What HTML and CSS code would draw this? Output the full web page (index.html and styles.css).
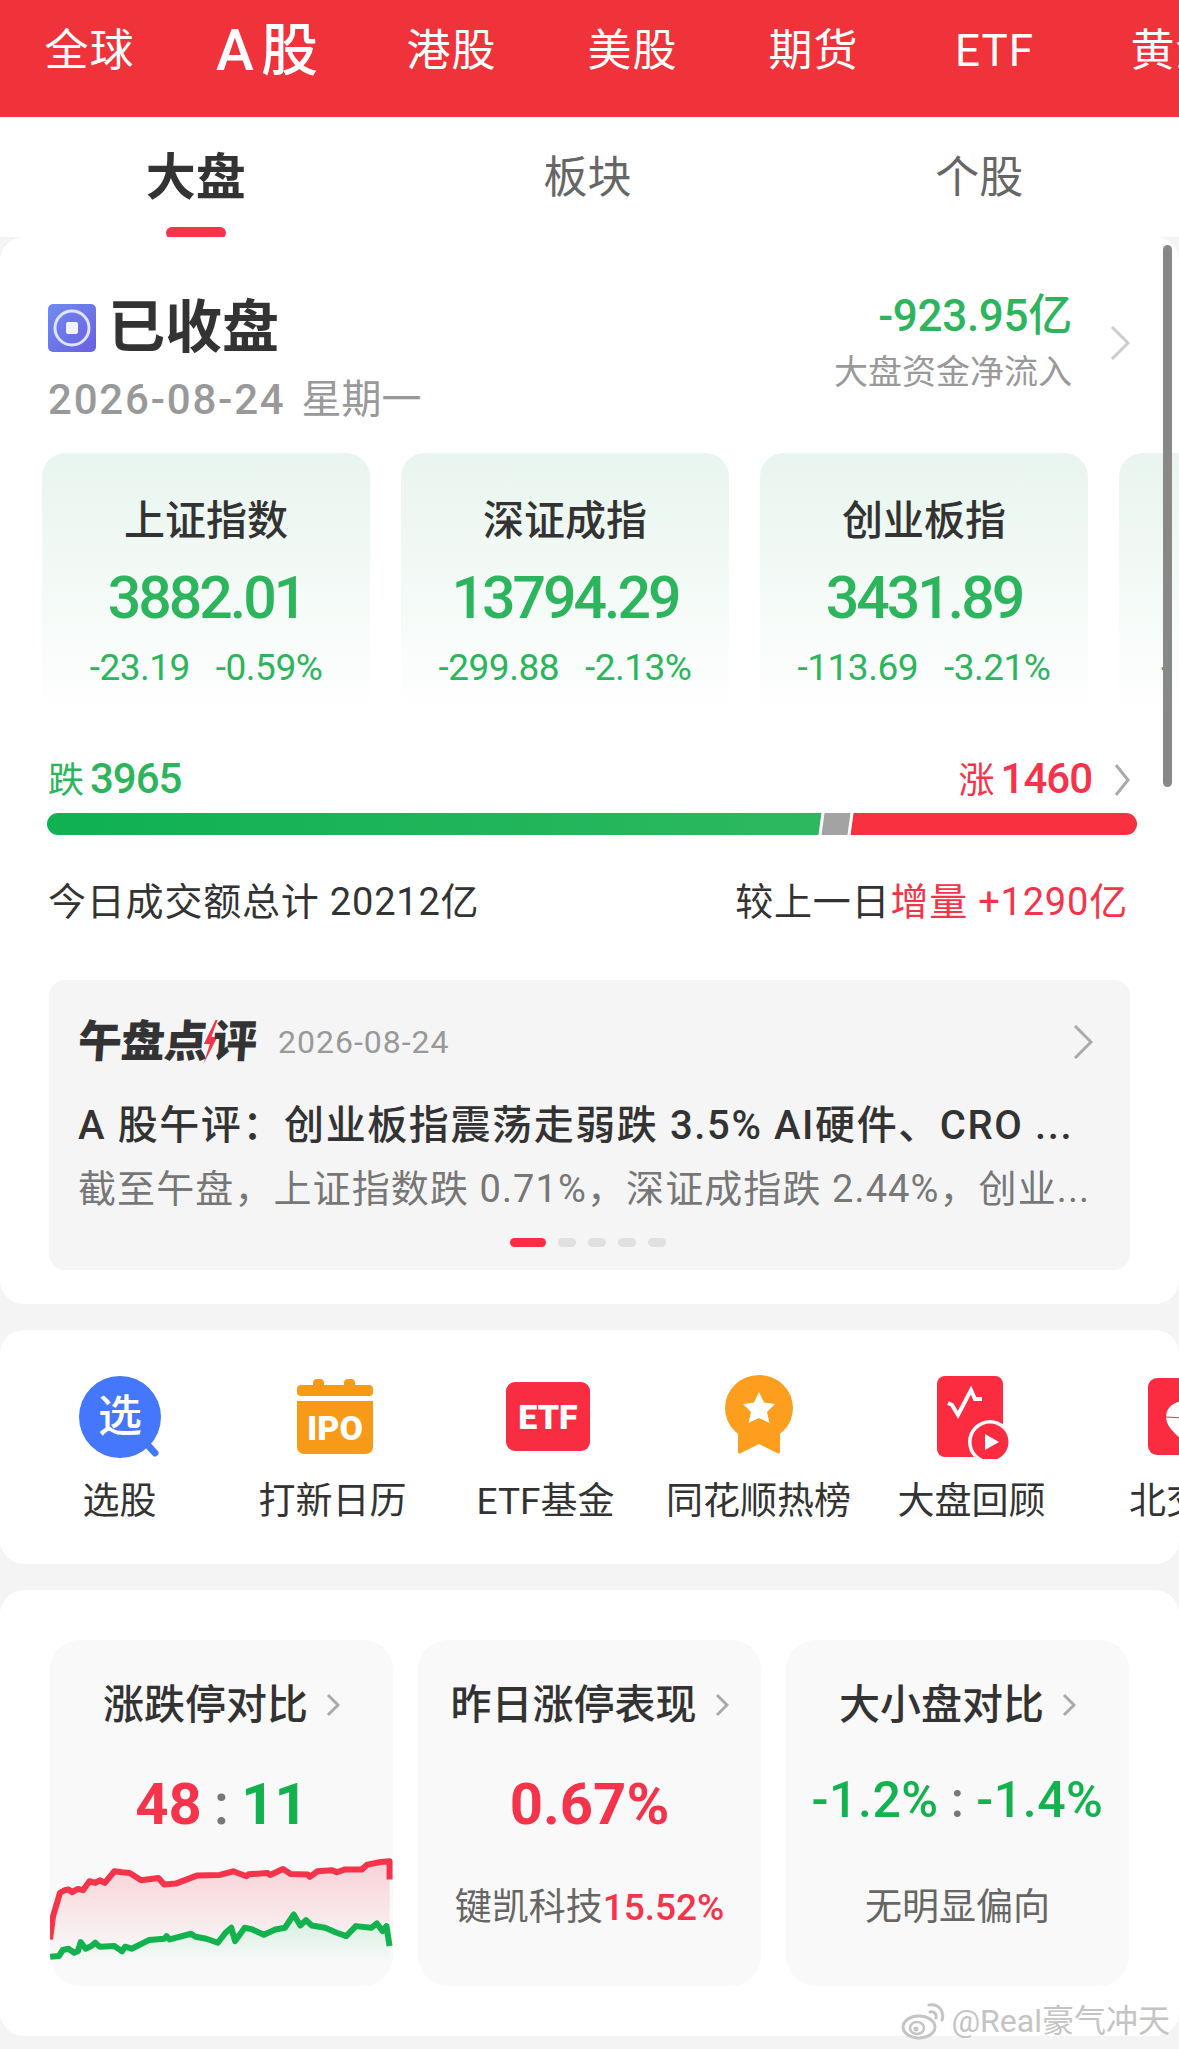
FILE: index.html
```html
<!DOCTYPE html>
<html lang="zh-CN">
<head>
    <meta charset="UTF-8">
    <meta name="viewport" content="width=device-width, initial-scale=1.0">
    <title>行情</title>
    <link rel="stylesheet" href="styles.css">
</head>
<body>

    <nav class="top-nav">
        <span class="top-item">全球</span>
        <span class="top-item top-active">A股</span>
        <span class="top-item">港股</span>
        <span class="top-item">美股</span>
        <span class="top-item">期货</span>
        <span class="top-item">ETF</span>
        <span class="top-item">黄金</span>
    </nav>

    <nav class="sub-nav">
        <span class="sub-item sub-active">大盘</span>
        <span class="sub-item">板块</span>
        <span class="sub-item">个股</span>
    </nav>

    <section class="card market">
        <div class="scroll-thumb"></div>

        <div class="status-row">
            <div>
                <div class="status-title">
                    <svg class="status-icon" viewBox="0 0 48 48">
                        <defs>
                            <linearGradient id="statusFill" x1="0" y1="0" x2="1" y2="1">
                                <stop offset="0" stop-color="#6f8cf0"/>
                                <stop offset="1" stop-color="#6a5fe0"/>
                            </linearGradient>
                        </defs>
                        <rect width="48" height="48" rx="5" fill="url(#statusFill)"/>
                        <circle cx="24" cy="24" r="17" fill="none" stroke="#dfe3fb" stroke-width="3"/>
                        <rect x="18" y="18" width="12" height="12" rx="2" fill="#f2f3fe"/>
                    </svg>
                    <span>已收盘</span>
                </div>
                <div class="status-date"><span class="date-num">2026-08-24</span> 星期一</div>
            </div>
            <div class="flow">
                <div class="flow-text">
                    <div class="flow-value">-923.95亿</div>
                    <div class="flow-label">大盘资金净流入</div>
                </div>
                <svg class="chev chev-light" width="20" height="36" viewBox="0 0 20 36"><path d="M2 2 L18 18 L2 34"/></svg>
            </div>
        </div>

        <div class="indices">
            <div class="index-card">
                <div class="index-name">上证指数</div>
                <div class="index-value">3882.01</div>
                <div class="index-change"><span>-23.19</span><span>-0.59%</span></div>
            </div>
            <div class="index-card">
                <div class="index-name">深证成指</div>
                <div class="index-value">13794.29</div>
                <div class="index-change"><span>-299.88</span><span>-2.13%</span></div>
            </div>
            <div class="index-card">
                <div class="index-name">创业板指</div>
                <div class="index-value">3431.89</div>
                <div class="index-change"><span>-113.69</span><span>-3.21%</span></div>
            </div>
            <div class="index-card index-peek">
                <div class="index-change">-</div>
            </div>
        </div>

        <div class="breadth">
            <div class="fall">跌 <b>3965</b></div>
            <div class="rise-wrap">
                <div class="rise">涨 <b>1460</b></div>
                <svg class="chev" width="16" height="34" viewBox="0 0 16 34"><path d="M2 2 L14 17 L2 32"/></svg>
            </div>
        </div>
        <div class="bar">
            <div class="bar-green"></div>
            <div class="bar-gray"></div>
            <div class="bar-red"></div>
        </div>

        <div class="turnover">
            <div>今日成交额总计 20212亿</div>
            <div>较上一日<span class="red">增量 +1290亿</span></div>
        </div>

        <div class="news">
            <div class="news-head">
                <div class="news-logo">午盘点<svg class="bolt" width="16" height="44" viewBox="0 0 16 44"><path d="M12 0 L2 24 L8 24 L3 44 L15 17 L9 17 L14 0 Z"/></svg>评</div>
                <div class="news-date">2026-08-24</div>
                <svg class="chev news-chev" width="20" height="34" viewBox="0 0 20 34"><path d="M2 1 L18 17 L2 33"/></svg>
            </div>
            <div class="news-title">A 股午评：创业板指震荡走弱跌 3.5% AI硬件、CRO ...</div>
            <div class="news-desc">截至午盘，上证指数跌 0.71%，深证成指跌 2.44%，创业...</div>
            <div class="dots">
                <i class="dot dot-on"></i><i class="dot"></i><i class="dot"></i><i class="dot"></i><i class="dot"></i>
            </div>
        </div>
    </section>

    <section class="card shortcuts">
        <div class="shortcut">
            <svg class="shortcut-icon" viewBox="0 0 100 84">
                <path d="M74 66 L85 78" stroke="#4477fb" stroke-width="7" stroke-linecap="round"/>
                <circle cx="50" cy="42" r="41" fill="#4477fb"/>
                <text class="icon-glyph" x="50" y="57" text-anchor="middle">选</text>
            </svg>
            <span>选股</span>
        </div>
        <div class="shortcut">
            <svg class="shortcut-icon" viewBox="0 0 100 84">
                <rect x="30" y="4" width="11" height="12" rx="4" fill="#f69a18"/>
                <rect x="61" y="4" width="11" height="12" rx="4" fill="#f69a18"/>
                <rect x="14" y="10" width="76" height="11" rx="4" fill="#f69a18"/>
                <path d="M14 26 H90 V72 a7 7 0 0 1 -7 7 H21 a7 7 0 0 1 -7 -7 Z" fill="#f69a18"/>
                <text class="icon-label" x="52" y="65" text-anchor="middle">IPO</text>
            </svg>
            <span>打新日历</span>
        </div>
        <div class="shortcut">
            <svg class="shortcut-icon" viewBox="0 0 100 84">
                <rect x="10" y="7" width="84" height="69" rx="9" fill="#f92d41"/>
                <text class="icon-label" x="52" y="54" text-anchor="middle">ETF</text>
            </svg>
            <span>ETF基金</span>
        </div>
        <div class="shortcut">
            <svg class="shortcut-icon" viewBox="0 0 100 84">
                <path d="M29 50 V77 a1.5 1.5 0 0 0 2 1.5 L50 69 L69 78.5 a1.5 1.5 0 0 0 2 -1.5 V50 Z" fill="#fd9e1f"/>
                <ellipse cx="50" cy="33" rx="34" ry="33" fill="#fd9e1f"/>
                <path d="M50 17 L55 27.5 L66 29 L58 37 L60.5 48 L50 43 L39.5 48 L42 37 L34 29 L45 27.5 Z" fill="#fff"/>
            </svg>
            <span>同花顺热榜</span>
        </div>
        <div class="shortcut">
            <svg class="shortcut-icon" viewBox="0 0 100 84">
                <rect x="15" y="1" width="66" height="81" rx="8" fill="#fb2c40"/>
                <path d="M26 28 L30 30 L36 40 L49 15 L53 24 L60 24" fill="none" stroke="#fff" stroke-width="4"/>
                <circle cx="68" cy="67" r="22" fill="#fff"/>
                <circle cx="68" cy="67" r="18.5" fill="#fb2c40"/>
                <path d="M63 59 L77 67 L63 75 Z" fill="#fff"/>
            </svg>
            <span>大盘回顾</span>
        </div>
        <div class="shortcut">
            <svg class="shortcut-icon" viewBox="0 0 100 84">
                <rect x="13" y="3" width="74" height="77" rx="9" fill="#fb2c40"/>
                <path d="M50 26 C38 26 31 33 31 42 C31 52 42 60 50 68 C58 60 69 52 69 42 C69 33 62 26 50 26 Z" fill="#fff"/>
                <path d="M31 42 L50 43" stroke="#fb2c40" stroke-width="1"/>
            </svg>
            <span>北交所</span>
        </div>
    </section>

    <section class="card compare">
        <div class="compare-card">
            <div class="compare-title">涨跌停对比<svg class="chev" width="14" height="24" viewBox="0 0 14 24"><path d="M2 2 L12 12 L2 22"/></svg></div>
            <div class="compare-value"><span class="red">48</span><span class="colon">:</span><span class="green">11</span></div>
            <svg class="limit-chart" viewBox="132 760 895 340" preserveAspectRatio="none">
                <defs>
                    <linearGradient id="redFill" x1="0" y1="0" x2="0" y2="1">
                        <stop offset="0" stop-color="#f5334a" stop-opacity=".2"/>
                        <stop offset="1" stop-color="#f5334a" stop-opacity="0"/>
                    </linearGradient>
                    <linearGradient id="greenFill" x1="0" y1="0" x2="0" y2="1">
                        <stop offset="0" stop-color="#12b34f" stop-opacity=".16"/>
                        <stop offset="1" stop-color="#12b34f" stop-opacity="0"/>
                    </linearGradient>
                </defs>
                <path fill="url(#redFill)" d="M132 1020 L140 950 L158 880 L180 870 L205 875 L235 845 L275 850 L300 815 L340 820 L370 842 L415 835 L430 855 L460 852 L515 828 L575 826 L610 815 L645 826 L700 820 L740 813 L760 823 L805 825 L830 815 L880 812 L900 810 L945 810 L960 795 L995 787 L1018 785 L1018 1040 L1000 990 L970 985 L930 980 L905 1005 L850 985 L800 965 L768 950 L745 985 L690 1003 L640 985 L605 990 L570 1025 L500 1003 L430 1018 L390 1022 L325 1052 L250 1035 L132 1072 Z"/>
                <path fill="url(#greenFill)" d="M132 1072 L155 1070 L180 1048 L205 1055 L212 1032 L225 1045 L250 1035 L300 1040 L325 1052 L345 1045 L390 1022 L430 1018 L500 1003 L540 1018 L570 1025 L605 990 L615 1020 L640 985 L690 1003 L720 990 L745 985 L768 950 L785 975 L800 965 L850 985 L905 1005 L930 980 L970 985 L985 975 L1000 995 L1010 985 L1018 1040 V1090 H132 Z"/>
                <path class="line-red" d="M132 1020 L140 950 L158 880 L170 872 L180 870 L190 878 L205 868 L218 872 L235 845 L250 850 L262 842 L275 850 L300 815 L320 818 L340 820 L370 842 L415 835 L430 855 L460 852 L515 828 L575 826 L610 815 L645 830 L650 824 L700 820 L706 826 L740 808 L760 823 L805 825 L810 832 L830 815 L868 812 L880 818 L900 810 L945 810 L960 795 L995 787 L1018 785 L1018 840"/>
                <path class="line-green" d="M132 1072 L155 1070 L165 1052 L180 1048 L195 1060 L205 1055 L212 1028 L225 1048 L240 1040 L250 1030 L262 1042 L300 1040 L320 1056 L328 1042 L345 1048 L390 1022 L430 1018 L436 1010 L444 1020 L500 1003 L512 1012 L540 1018 L570 1030 L590 1000 L605 985 L615 1025 L640 985 L660 990 L690 1006 L720 990 L745 985 L768 945 L785 978 L800 962 L815 978 L850 985 L880 1000 L905 1010 L930 980 L970 985 L985 972 L1000 995 L1010 980 L1018 1040"/>
            </svg>
        </div>
        <div class="compare-card">
            <div class="compare-title">昨日涨停表现<svg class="chev" width="14" height="24" viewBox="0 0 14 24"><path d="M2 2 L12 12 L2 22"/></svg></div>
            <div class="compare-value"><span class="red">0.67%</span></div>
            <div class="compare-sub">键凯科技<b class="red">15.52%</b></div>
        </div>
        <div class="compare-card">
            <div class="compare-title">大小盘对比<svg class="chev" width="14" height="24" viewBox="0 0 14 24"><path d="M2 2 L12 12 L2 22"/></svg></div>
            <div class="compare-value compare-small"><span class="green">-1.2%</span><span class="colon">:</span><span class="green">-1.4%</span></div>
            <div class="compare-sub">无明显偏向</div>
        </div>

        <div class="watermark">
            <svg width="46" height="38" viewBox="0 0 46 38">
                <ellipse cx="18" cy="25" rx="16" ry="11" fill="#fff" stroke="#c4c4c4" stroke-width="3"/>
                <ellipse cx="16" cy="26" rx="7" ry="6" fill="none" stroke="#c4c4c4" stroke-width="2.5"/>
                <circle cx="15" cy="27" r="2.5" fill="#c4c4c4"/>
                <path d="M28 3 C37 1 44 9 41 18 M29 10 C33 9 36 12 35 16" fill="none" stroke="#c4c4c4" stroke-width="3" stroke-linecap="round"/>
            </svg>
            <span>@Real豪气冲天</span>
        </div>
    </section>

</body>
</html>
```

FILE: styles.css
```css
body {
    margin: 0;
    width: 1179px;
    height: 2049px;
    overflow: hidden;
    background-color: #f4f4f4;
    font-family: Roboto, "Noto Sans CJK SC", sans-serif;
    color: #333;
}
.red {
    color: #f5334a;
}
.green {
    color: #12b34f;
}

/* top tabs */
.top-nav {
    display: flex;
    height: 117px;
    margin-left: -1px;
    background-color: #f0323a;
    color: #fff;
    overflow: hidden;
}
.top-item {
    flex: none;
    width: 181px;
    text-align: center;
    font-size: 44px;
    line-height: 102px;
    letter-spacing: 1px;
}
.top-active {
    font-size: 57px;
    font-weight: 500;
    letter-spacing: 7px;
}
.sub-nav {
    display: grid;
    grid-template-columns: repeat(3, 1fr);
    height: 120px;
    padding-right: 4px;
    background-color: #fff;
}
.sub-item {
    position: relative;
    text-align: center;
    font-size: 44px;
    line-height: 122px;
    color: #666;
}
.sub-active {
    font-size: 50px;
    font-weight: 700;
    color: #333;
}
.sub-active::after {
    content: "";
    position: absolute;
    left: 50%;
    bottom: 0;
    width: 60px;
    height: 12px;
    margin-left: -30px;
    border-radius: 6px;
    background-color: #f5334a;
}

/* cards */
.card {
    position: relative;
    background-color: #fff;
    border-radius: 24px;
}
.market {
    height: 1067px;
    overflow: hidden;
}
.scroll-thumb {
    position: absolute;
    top: 8px;
    right: 7px;
    width: 9px;
    height: 542px;
    border-radius: 5px;
    background-color: #888;
}
.chev {
    flex: none;
}
.chev path {
    fill: none;
    stroke: #aaa;
    stroke-width: 3;
}
.chev-light path {
    stroke: #ccc;
}

/* status */
.status-row {
    display: flex;
    justify-content: space-between;
    padding: 61px 49px 0 48px;
}
.status-title {
    display: flex;
    align-items: center;
    gap: 12px;
    height: 60px;
    font-size: 57px;
    font-weight: 700;
    line-height: 60px;
}
.status-icon {
    width: 48px;
    height: 48px;
}
.status-date {
    display: flex;
    align-items: center;
    margin-top: 20px;
    font-size: 40px;
    line-height: 44px;
    color: #999;
}
.date-num {
    font-size: 42px;
    font-weight: 500;
    letter-spacing: 1.8px;
    margin-right: 16px;
}
.flow {
    align-self: flex-start;
    display: flex;
    align-items: center;
    gap: 38px;
    margin-top: -4px;
}
.flow-text {
    text-align: right;
}
.flow-value {
    font-size: 44px;
    font-weight: 500;
    line-height: 44px;
    letter-spacing: -0.3px;
    color: #2db55d;
}
.flow-label {
    margin-top: 14px;
    font-size: 34px;
    line-height: 40px;
    color: #999;
}

/* index cards */
.indices {
    display: flex;
    gap: 31px;
    margin-top: 31px;
    margin-left: 42px;
}
.index-card {
    flex: none;
    width: 328px;
    height: 264px;
    padding-top: 46px;
    box-sizing: border-box;
    border-radius: 24px;
    background: linear-gradient(#e8f5ee, #fff);
    text-align: center;
}
.index-name {
    font-size: 41px;
    font-weight: 500;
    line-height: 44px;
}
.index-value {
    margin-top: 25px;
    font-size: 59px;
    font-weight: 500;
    line-height: 60px;
    letter-spacing: -3px;
    color: #2db55d;
}
.index-change {
    display: flex;
    justify-content: center;
    gap: 26px;
    margin-top: 20px;
    font-size: 37px;
    line-height: 40px;
    letter-spacing: -0.5px;
    color: #2db55d;
}
.index-peek .index-change {
    justify-content: flex-start;
    margin-top: 149px;
    padding-left: 42px;
}

/* rise and fall */
.breadth {
    display: flex;
    justify-content: space-between;
    margin-top: 42px;
    padding: 0 49px 0 48px;
    font-size: 36px;
    line-height: 40px;
}
.breadth b {
    margin-left: -3px;
    font-size: 42px;
    font-weight: 500;
    letter-spacing: -1px;
}
.fall {
    color: #2db55d;
}
.rise {
    color: #f5334a;
}
.rise-wrap {
    display: flex;
    align-items: center;
    gap: 22px;
}
.bar {
    display: flex;
    height: 22px;
    margin: 12px 42px 0 47px;
}
.bar-green {
    flex: none;
    width: 776px;
    border-radius: 11px 0 0 11px;
    background: linear-gradient(90deg, #0fb153, #2db85f);
}
.bar-gray {
    flex: none;
    width: 26px;
    margin: 0 -3px;
    border: 0 solid #fff;
    border-width: 0 3px;
    background-color: #a3a3a3;
    transform: skewX(-8deg);
}
.bar-red {
    flex: none;
    width: 288px;
    border-radius: 0 11px 11px 0;
    background-color: #f9303f;
}
.turnover {
    display: flex;
    justify-content: space-between;
    margin-top: 45px;
    padding: 0 51px 0 48px;
    font-size: 38px;
    line-height: 44px;
    letter-spacing: 0.8px;
}

/* noon review */
.news {
    height: 290px;
    margin: 56px 49px 0;
    padding: 40px 29px 0;
    box-sizing: border-box;
    border-radius: 16px;
    background-color: #f5f5f5;
}
.news-head {
    display: flex;
    align-items: center;
    height: 44px;
}
.news-logo {
    position: relative;
    display: flex;
    align-items: center;
    font-size: 44px;
    font-weight: 900;
    line-height: 44px;
    letter-spacing: -1px;
    transform: skewX(-4deg);
}
.bolt {
    margin: 0 -5px;
    fill: #f5334a;
}
.news-date {
    margin-left: 22px;
    font-size: 32px;
    letter-spacing: 1px;
    color: #999;
}
.news-chev {
    margin-left: auto;
    margin-right: 8px;
}
.news-title {
    margin-top: 40px;
    font-size: 40px;
    font-weight: 500;
    line-height: 44px;
    letter-spacing: 1.6px;
    white-space: nowrap;
}
.news-desc {
    margin-top: 19px;
    font-size: 38px;
    line-height: 44px;
    letter-spacing: 1.1px;
    color: #777;
    white-space: nowrap;
}
.dots {
    display: flex;
    justify-content: center;
    gap: 12px;
    margin-top: 27px;
    margin-right: 4px;
}
.dot {
    width: 18px;
    height: 9px;
    border-radius: 5px;
    background-color: #e0e0e0;
}
.dot-on {
    width: 36px;
    background-color: #f92d41;
}

/* shortcuts */
.shortcuts {
    display: flex;
    height: 234px;
    margin-top: 26px;
    padding: 45px 0 0 13px;
    box-sizing: border-box;
    overflow: hidden;
}
.shortcut {
    flex: none;
    display: flex;
    flex-direction: column;
    align-items: center;
    width: 213px;
    font-size: 37px;
    line-height: 44px;
    white-space: nowrap;
}
.shortcut-icon {
    width: 100px;
    height: 84px;
    margin-bottom: 21px;
}
.icon-glyph {
    font-size: 44px;
    font-weight: 500;
    fill: #fff;
}
.icon-label {
    font-size: 34px;
    font-weight: 900;
    fill: #fff;
}

/* comparison cards */
.compare {
    display: flex;
    gap: 25px;
    height: 446px;
    margin-top: 26px;
    padding: 50px 0 0 50px;
    box-sizing: border-box;
}
.compare-card {
    flex: none;
    width: 343px;
    height: 346px;
    padding-top: 43px;
    box-sizing: border-box;
    border-radius: 30px;
    background-color: #f9f9f9;
    text-align: center;
    overflow: hidden;
}
.compare-title {
    display: flex;
    justify-content: center;
    align-items: center;
    gap: 18px;
    font-size: 41px;
    font-weight: 500;
    line-height: 44px;
}
.compare-value {
    display: flex;
    justify-content: center;
    gap: 12px;
    height: 60px;
    margin-top: 47px;
    font-size: 58px;
    font-weight: 700;
    line-height: 60px;
}
.colon {
    font-weight: 500;
    color: #777;
}
.compare-small {
    height: 64px;
    margin-top: 43px;
    font-size: 50px;
    font-weight: 500;
    letter-spacing: 0.5px;
}
.compare-sub {
    margin-top: 52px;
    font-size: 37px;
    line-height: 44px;
    color: #666;
}
.compare-sub b {
    font-weight: 500;
}
.limit-chart {
    display: block;
    width: 343px;
    height: 113px;
    margin-top: 19px;
}
.limit-chart path {
    stroke-linejoin: round;
}
.line-red,
.line-green {
    fill: none;
    stroke-width: 6;
    vector-effect: non-scaling-stroke;
}
.line-red {
    stroke: #f5334a;
}
.line-green {
    stroke: #12b34f;
}
.watermark {
    position: absolute;
    right: 9px;
    bottom: -4px;
    display: flex;
    align-items: center;
    gap: 4px;
    font-size: 32px;
    line-height: 38px;
    color: #c4c4c4;
    text-shadow: 0 0 2px #fff;
}
```
